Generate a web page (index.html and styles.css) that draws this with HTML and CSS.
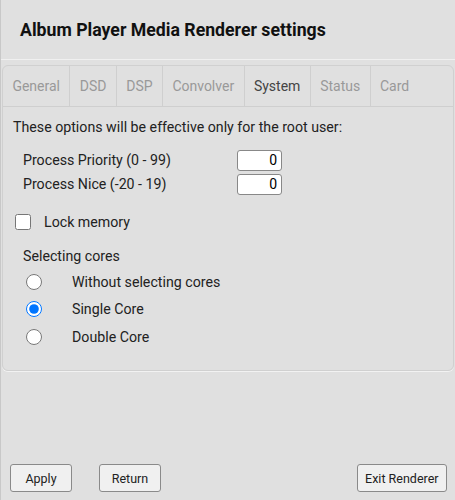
FILE: index.html
```html
<!DOCTYPE html>
<html lang="en">
<head>
    <meta charset="UTF-8">
    <meta name="viewport" content="width=device-width, initial-scale=1.0">
    <title>Album Player Media Renderer settings</title>
    <link rel="stylesheet" href="styles.css">
</head>
<body>
    <div class="page">
        <div class="header">
            <h1>Album Player Media Renderer settings</h1>
        </div>

        <div class="panel">
            <div class="tabs">
                <div class="tab">General</div>
                <div class="tab">DSD</div>
                <div class="tab">DSP</div>
                <div class="tab">Convolver</div>
                <div class="tab active">System</div>
                <div class="tab">Status</div>
                <div class="tab last">Card</div>
            </div>
            <div class="content">
                <p class="note">These options will be effective only for the root user:</p>
                <div class="fields">
                    <label class="field">
                        <span>Process Priority (0 - 99)</span>
                        <input type="text" value="0">
                    </label>
                    <label class="field">
                        <span>Process Nice (-20 - 19)</span>
                        <input type="text" value="0">
                    </label>
                </div>
                <label class="check">
                    <input type="checkbox">
                    <span>Lock memory</span>
                </label>
                <div class="cores">
                    <div class="cores-title">Selecting cores</div>
                    <label class="radio">
                        <input type="radio" name="cores">
                        <span>Without selecting cores</span>
                    </label>
                    <label class="radio">
                        <input type="radio" name="cores" checked>
                        <span>Single Core</span>
                    </label>
                    <label class="radio">
                        <input type="radio" name="cores">
                        <span>Double Core</span>
                    </label>
                </div>
            </div>
        </div>

        <div class="buttons">
            <button>Apply</button>
            <button>Return</button>
            <button class="exit">Exit Renderer</button>
        </div>
    </div>
</body>
</html>
```

FILE: styles.css
```css
body {
    margin: 0;
    font-family: Roboto, "Liberation Sans", sans-serif;
    background-color: #e0e0e0;
    color: #222;
}
.page {
    height: 500px;
    box-sizing: border-box;
    border-left: 1px solid #c8c8c8;
    display: flex;
    flex-direction: column;
}
.header {
    height: 60px;
    box-sizing: border-box;
    padding: 0 0 0 19px;
    display: flex;
    align-items: center;
    border-bottom: 1px solid #f0f0f0;
}
h1 {
    margin: 0;
    font-size: 17.7px;
    font-weight: bold;
    color: #111;
}
.panel {
    margin: 5px 1px 0 1px;
    height: 306px;
    box-sizing: border-box;
    border: 1px solid #d0d0d0;
    border-radius: 6px;
    box-shadow: 0 1px 0 #f2f2f2;
}
.tabs {
    display: flex;
    height: 40px;
    border-bottom: 1px solid #cfcfcf;
}
.tab {
    display: flex;
    align-items: center;
    padding: 0 9.4px;
    font-size: 14px;
    color: #999;
    border-right: 1px solid #cfcfcf;
}
.tab.active {
    color: #444;
}
.tab.last {
    border-right: none;
}
.content {
    padding: 12px 0 0 10px;
}
.note {
    margin: 0;
    font-size: 14.2px;
}
.fields {
    margin-top: 13px;
    padding-left: 10px;
}
.field {
    display: flex;
    align-items: center;
    height: 24px;
    font-size: 14.2px;
}
.field span {
    width: 214px;
}
.field input {
    width: 45px;
    height: 21px;
    box-sizing: border-box;
    border: 1px solid #888;
    border-radius: 3px;
    padding: 0 4px;
    text-align: right;
    font-family: Roboto, "Liberation Sans", sans-serif;
    font-size: 14px;
    background: #fff;
}
.check {
    display: flex;
    align-items: center;
    margin-top: 18px;
    font-size: 14.2px;
}
.check input {
    margin: 0 13px 0 2px;
    width: 16px;
    height: 16px;
}
.cores {
    margin-top: 18px;
    padding-left: 10px;
    font-size: 14.2px;
}
.cores-title {
    height: 20px;
}
.radio {
    display: flex;
    align-items: center;
    height: 27.5px;
}
.radio input {
    margin: 0 30px 0 3px;
    width: 16px;
    height: 16px;
}
.buttons {
    margin-top: auto;
    display: flex;
    padding: 0 8px 8px 9px;
    gap: 27px;
}
button {
    height: 28px;
    padding: 0 7.5px;
    min-width: 62px;
    font-family: Roboto, "Liberation Sans", sans-serif;
    font-size: 12.5px;
    color: #222;
    background-color: #f0f0f0;
    border: 1px solid #8a8a8a;
    border-radius: 3px;
}
.exit {
    margin-left: auto;
}
```
